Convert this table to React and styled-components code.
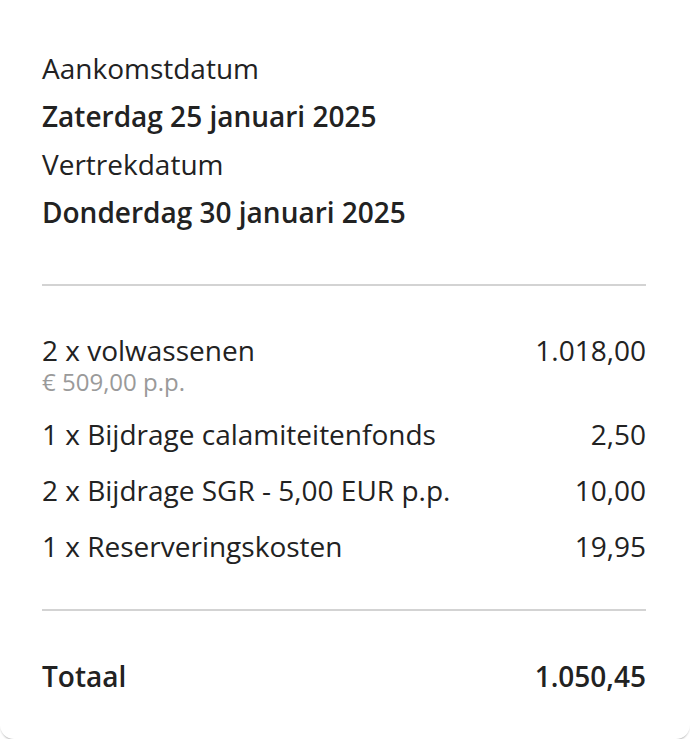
import React from "react";
import styled, { createGlobalStyle } from "styled-components";

const Global = createGlobalStyle`
  html, body { margin: 0; padding: 0; background: #ffffff; }
  body { font-family: "Open Sans", "Liberation Sans", sans-serif; color: #222222; }
`;

const Card = styled.div`
  box-sizing: border-box;
  width: 690px;
  background: #ffffff;
  border-radius: 0 0 14px 14px;
  box-shadow: 0 2px 2px -1px rgba(0, 0, 0, 0.3);
  padding: 44px 44px 45px 42px;
`;

const Dates = styled.div`
  display: flex;
  flex-direction: column;
`;

const DateLine = styled.div`
  font-size: 28px;
  line-height: 48px;
  font-weight: ${(p) => (p.$strong ? 600 : 400)};
  color: #222222;
`;

const Divider = styled.hr`
  margin: ${(p) => p.$m};
  border: none;
  height: 2px;
  background: #d3d3d3;
`;

const Lines = styled.div`
  display: flex;
  flex-direction: column;
`;

const Row = styled.div`
  display: flex;
  justify-content: space-between;
  align-items: flex-start;
  padding: ${(p) => (p.$flush ? "0" : "10px 0")};
  font-size: 28px;
  line-height: 36px;
  font-weight: ${(p) => (p.$strong ? 600 : 400)};
  color: #222222;
`;

const Label = styled.div`
  display: flex;
  flex-direction: column;
`;

const Sub = styled.span`
  font-size: 24px;
  line-height: 27px;
  color: #9a9a9a;
  margin-bottom: 1px;
`;

const Amount = styled.span`
  text-align: right;
`;

const items = [
  { label: "2 x volwassenen", sub: "€ 509,00 p.p.", amount: "1.018,00" },
  { label: "1 x Bijdrage calamiteitenfonds", amount: "2,50" },
  { label: "2 x Bijdrage SGR - 5,00 EUR p.p.", amount: "10,00" },
  { label: "1 x Reserveringskosten", amount: "19,95" },
];

export default function App() {
  return (
    <>
      <Global />
      <Card>
        <Dates>
          <DateLine>Aankomstdatum</DateLine>
          <DateLine $strong>Zaterdag 25 januari 2025</DateLine>
          <DateLine>Vertrekdatum</DateLine>
          <DateLine $strong>Donderdag 30 januari 2025</DateLine>
        </Dates>
        <Divider $m="48px 0 36px" />
        <Lines>
          {items.map((it) => (
            <Row key={it.label}>
              <Label>
                <span>{it.label}</span>
                {it.sub && <Sub>{it.sub}</Sub>}
              </Label>
              <Amount>{it.amount}</Amount>
            </Row>
          ))}
        </Lines>
        <Divider $m="35px 0 47px" />
        <Row $strong $flush>
          <span>Totaal</span>
          <Amount>1.050,45</Amount>
        </Row>
      </Card>
    </>
  );
}
